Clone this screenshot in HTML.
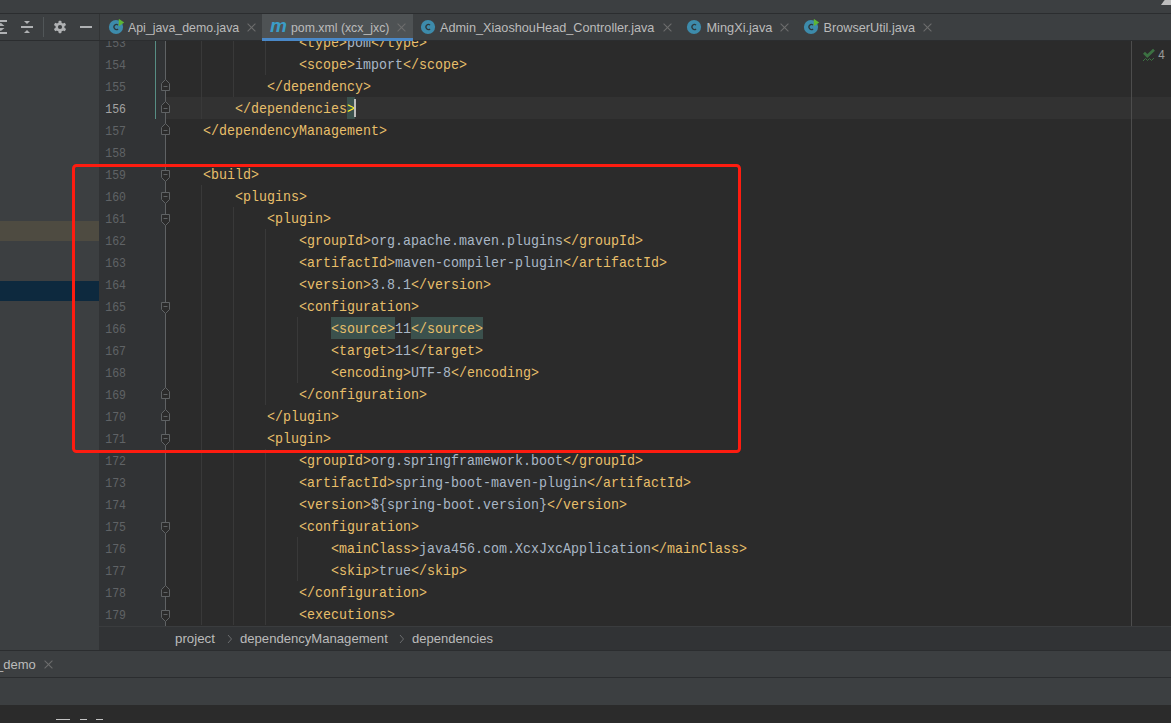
<!DOCTYPE html>
<html><head><meta charset="utf-8">
<style>
*{margin:0;padding:0;box-sizing:border-box}
html,body{width:1171px;height:723px;overflow:hidden;background:#3C3F41}
body{position:relative;font-family:"Liberation Sans",sans-serif}
.a{position:absolute}
.ln{position:absolute;height:22px;line-height:22px;font-family:"Liberation Mono",monospace;font-size:13.333px;white-space:pre;color:#A9B7C6;transform:scaleY(1.065);transform-origin:0 16px}
.tg{color:#E8BF6A}
.vl{color:#A9B7C6}
.hl{background:#3B514D}
.mt{color:#FFEF28}
.num{position:absolute;left:99px;width:27px;text-align:right;height:22px;line-height:22px;font-family:"Liberation Mono",monospace;font-size:11.5px;color:#606366;transform:scaleY(1.15);transform-origin:0 0}
.num.cur{color:#A4A3A3}
.fold{position:absolute;left:160px;width:11px;height:14px}
.fold svg{display:block}
.guide{position:absolute;width:1px;background:#393939}
.tab{position:absolute;top:14.7px;height:26px;line-height:26px;color:#BBBBBB;white-space:nowrap}
.tt{position:absolute;top:0;font-size:12.6px}
.x{position:absolute;width:9px;height:9px}
.x:before,.x:after{content:"";position:absolute;left:4px;top:-1px;width:1px;height:11px;background:#6E6E6E;transform:rotate(45deg)}
.x:after{transform:rotate(-45deg)}
.cic{position:absolute;width:15px;height:15px;border-radius:50%;background:#3D8EAE}
.cic:after{content:"";position:absolute;left:4px;top:4px;width:7px;height:7px;border:1.5px solid #2E3436;border-radius:50%;border-right-color:transparent;box-sizing:border-box}
.run{position:absolute;width:0;height:0;border-top:4px solid transparent;border-bottom:4px solid transparent;border-left:6px solid #5BB534}
.bc{position:absolute;top:626.8px;height:24px;line-height:24px;font-size:13px;color:#BBBBBB}
</style></head><body>
<!-- top strip -->
<div class="a" style="left:0;top:0;width:1171px;height:13px;background:#3C3F41"></div>
<div class="a" style="left:1161px;top:0;width:12px;height:5px;background:#BDBDBD;border-radius:4px 0 0 0;clip-path:polygon(30% 0,100% 0,100% 100%,0 100%)"></div>
<div class="a" style="left:0;top:13px;width:1171px;height:1px;background:#2B2D2F"></div>
<!-- left toolbar -->
<div class="a" style="left:0;top:20px;width:7px;height:2px;background:#AFB1B3"></div>
<div class="a" style="left:0;top:32px;width:7px;height:2px;background:#AFB1B3"></div>
<svg class="a" style="left:0;top:14px" width="8" height="26" viewBox="0 0 8 26"><path d="M-2.9 12 L4.5 12 L0.8 8.8 Z M-2.9 13.9 L4.5 13.9 L0.8 17.1 Z" fill="#AFB1B3"/></svg>
<div class="a" style="left:21px;top:26px;width:12px;height:2px;background:#AFB1B3"></div>
<div class="a" style="left:24px;top:20.5px;width:0;height:0;border-left:3px solid transparent;border-right:3px solid transparent;border-top:3.5px solid #AFB1B3"></div>
<div class="a" style="left:24px;top:29.5px;width:0;height:0;border-left:3px solid transparent;border-right:3px solid transparent;border-bottom:3.5px solid #AFB1B3"></div>
<div class="a" style="left:43px;top:17px;width:1px;height:20px;background:#515658"></div>
<svg class="a" style="left:53px;top:20px" width="14" height="14" viewBox="0 0 14 14"><g fill="#AFB1B3" transform="translate(7 7) scale(0.9)"><circle r="5"/><rect x="-1.6" y="-7" width="3.2" height="3" rx="0.8"/><rect x="-1.6" y="4" width="3.2" height="3" rx="0.8"/><rect x="-1.6" y="-7" width="3.2" height="3" rx="0.8" transform="rotate(60)"/><rect x="-1.6" y="-7" width="3.2" height="3" rx="0.8" transform="rotate(120)"/><rect x="-1.6" y="-7" width="3.2" height="3" rx="0.8" transform="rotate(240)"/><rect x="-1.6" y="-7" width="3.2" height="3" rx="0.8" transform="rotate(300)"/></g><circle cx="7" cy="7" r="2.1" fill="#3C3F41"/></svg>
<div class="a" style="left:80px;top:26px;width:12px;height:2px;background:#AFB1B3"></div>
<!-- tab bar -->
<div class="a" style="left:0;top:40px;width:1171px;height:1px;background:#2B2D2F"></div>
<div class="a" style="left:99px;top:14px;width:1px;height:26px;background:#323435"></div>
<svg class="a" style="left:108px;top:19px" width="18" height="16" viewBox="0 0 18 16"><circle cx="8" cy="8" r="7.1" fill="#3D8BAB"/><path d="M10.1 6.1 A2.5 2.5 0 1 0 10.1 9.9" fill="none" stroke="#2D383C" stroke-width="1.25"/><path d="M10.8 -0.2 L16.2 3.5 L10.8 7.2 Z" fill="#5DB536"/></svg>
<div class="tab" style="left:128px;font-size:12.35px">Api_java_demo.java</div>
<div class="x" style="left:247px;top:23px"></div>
<div class="a" style="left:262px;top:14px;width:151px;height:27px;background:#4E5254"></div>
<div class="a" style="left:262px;top:38px;width:151px;height:3px;background:#4A88C7"></div>
<div class="a" style="left:270px;top:14px;font-size:19px;font-style:italic;font-weight:bold;color:#3B9DC8;line-height:24px">m</div>
<div class="tab" style="left:291px;font-size:12.3px">pom.xml (xcx_jxc)</div>
<div class="x" style="left:397px;top:23px"></div>
<svg class="a" style="left:420px;top:19px" width="18" height="16" viewBox="0 0 18 16"><circle cx="8" cy="8" r="7.1" fill="#3D8BAB"/><path d="M10.1 6.1 A2.5 2.5 0 1 0 10.1 9.9" fill="none" stroke="#2D383C" stroke-width="1.25"/></svg>
<div class="tab" style="left:440px;font-size:12.7px">Admin_XiaoshouHead_Controller.java</div>
<div class="x" style="left:662.5px;top:22.7px"></div>
<svg class="a" style="left:686px;top:19px" width="18" height="16" viewBox="0 0 18 16"><circle cx="8" cy="8" r="7.1" fill="#3D8BAB"/><path d="M10.1 6.1 A2.5 2.5 0 1 0 10.1 9.9" fill="none" stroke="#2D383C" stroke-width="1.25"/></svg>
<div class="tab" style="left:706.5px;font-size:12.75px">MingXi.java</div>
<div class="x" style="left:779.5px;top:22.7px"></div>
<svg class="a" style="left:803px;top:19px" width="18" height="16" viewBox="0 0 18 16"><circle cx="8" cy="8" r="7.1" fill="#3D8BAB"/><path d="M10.1 6.1 A2.5 2.5 0 1 0 10.1 9.9" fill="none" stroke="#2D383C" stroke-width="1.25"/><path d="M10.8 -0.2 L16.2 3.5 L10.8 7.2 Z" fill="#5DB536"/></svg>
<div class="tab" style="left:823.5px;font-size:12.7px">BrowserUtil.java</div>
<div class="x" style="left:922.5px;top:22.8px"></div>
<!-- left panel highlights -->
<div class="a" style="left:0;top:221px;width:99px;height:20px;background:#4E4B41"></div>
<div class="a" style="left:0;top:281px;width:99px;height:20px;background:#0D293E"></div>
<!-- gutter + editor -->
<div class="a" style="left:99px;top:41px;width:67px;height:585px;background:#313335"></div>
<div class="a" style="left:166px;top:41px;width:1005px;height:585px;background:#2B2B2B;overflow:hidden" id="ed"></div>
<div class="a" style="left:166px;top:97px;width:1005px;height:22px;background:#323232"></div>
<div class="a" style="left:1131px;top:41px;width:1px;height:585px;background:#4D4D4D"></div>
<div class="a" style="left:155px;top:41px;width:1px;height:78px;background:#578E84"></div>
<div class="a" style="left:165px;top:41px;width:1px;height:585px;background:#5F6264"></div>
<div class="a" style="left:0;top:0;width:1171px;height:626px;overflow:hidden;clip-path:inset(41px 0 0 0)">
<div class="a" style="left:331px;top:317px;width:64px;height:22px;background:#3B514D"></div>
<div class="a" style="left:411px;top:317px;width:72px;height:22px;background:#3B514D"></div>
<div class="a" style="left:347px;top:97px;width:8px;height:22px;background:#3B514D"></div>
<div class="ln" style="top:33.3px;left:299px"><span class="tg">&lt;type&gt;</span><span class="vl">pom</span><span class="tg">&lt;/type&gt;</span></div>
<div class="num" style="top:30.7px">153</div>
<div class="ln" style="top:55.3px;left:299px"><span class="tg">&lt;scope&gt;</span><span class="vl">import</span><span class="tg">&lt;/scope&gt;</span></div>
<div class="num" style="top:52.7px">154</div>
<div class="ln" style="top:77.3px;left:267px"><span class="tg">&lt;/dependency&gt;</span></div>
<div class="num" style="top:74.7px">155</div>
<div class="fold" style="top:78px"><svg width="11" height="14" viewBox="0 0 11 14"><path d="M1.5 12.5 H9.5 V5.5 L5.5 1.5 L1.5 5.5 Z" fill="#2B2B2B" stroke="#5F6264" stroke-width="1"/><path d="M3.5 8.5 H7.5" stroke="#5F6264" stroke-width="1"/></svg></div>
<div class="ln" style="top:99.3px;left:235px"><span class="tg">&lt;/dependencies</span><span class="mt">&gt;</span></div>
<div class="num cur" style="top:96.7px">156</div>
<div class="fold" style="top:100px"><svg width="11" height="14" viewBox="0 0 11 14"><path d="M1.5 12.5 H9.5 V5.5 L5.5 1.5 L1.5 5.5 Z" fill="#2B2B2B" stroke="#5F6264" stroke-width="1"/><path d="M3.5 8.5 H7.5" stroke="#5F6264" stroke-width="1"/></svg></div>
<div class="ln" style="top:121.3px;left:203px"><span class="tg">&lt;/dependencyManagement&gt;</span></div>
<div class="num" style="top:118.7px">157</div>
<div class="fold" style="top:122px"><svg width="11" height="14" viewBox="0 0 11 14"><path d="M1.5 12.5 H9.5 V5.5 L5.5 1.5 L1.5 5.5 Z" fill="#2B2B2B" stroke="#5F6264" stroke-width="1"/><path d="M3.5 8.5 H7.5" stroke="#5F6264" stroke-width="1"/></svg></div>
<div class="ln" style="top:143.3px;left:171px"></div>
<div class="num" style="top:140.7px">158</div>
<div class="ln" style="top:165.3px;left:203px"><span class="tg">&lt;build&gt;</span></div>
<div class="num" style="top:162.7px">159</div>
<div class="fold" style="top:169px"><svg width="11" height="14" viewBox="0 0 11 14"><path d="M1.5 1.5 H9.5 V8.5 L5.5 12.5 L1.5 8.5 Z" fill="#2B2B2B" stroke="#5F6264" stroke-width="1"/><path d="M3.5 5.5 H7.5" stroke="#5F6264" stroke-width="1"/></svg></div>
<div class="ln" style="top:187.3px;left:235px"><span class="tg">&lt;plugins&gt;</span></div>
<div class="num" style="top:184.7px">160</div>
<div class="fold" style="top:191px"><svg width="11" height="14" viewBox="0 0 11 14"><path d="M1.5 1.5 H9.5 V8.5 L5.5 12.5 L1.5 8.5 Z" fill="#2B2B2B" stroke="#5F6264" stroke-width="1"/><path d="M3.5 5.5 H7.5" stroke="#5F6264" stroke-width="1"/></svg></div>
<div class="ln" style="top:209.3px;left:267px"><span class="tg">&lt;plugin&gt;</span></div>
<div class="num" style="top:206.7px">161</div>
<div class="fold" style="top:213px"><svg width="11" height="14" viewBox="0 0 11 14"><path d="M1.5 1.5 H9.5 V8.5 L5.5 12.5 L1.5 8.5 Z" fill="#2B2B2B" stroke="#5F6264" stroke-width="1"/><path d="M3.5 5.5 H7.5" stroke="#5F6264" stroke-width="1"/></svg></div>
<div class="ln" style="top:231.3px;left:299px"><span class="tg">&lt;groupId&gt;</span><span class="vl">org.apache.maven.plugins</span><span class="tg">&lt;/groupId&gt;</span></div>
<div class="num" style="top:228.7px">162</div>
<div class="ln" style="top:253.3px;left:299px"><span class="tg">&lt;artifactId&gt;</span><span class="vl">maven-compiler-plugin</span><span class="tg">&lt;/artifactId&gt;</span></div>
<div class="num" style="top:250.7px">163</div>
<div class="ln" style="top:275.3px;left:299px"><span class="tg">&lt;version&gt;</span><span class="vl">3.8.1</span><span class="tg">&lt;/version&gt;</span></div>
<div class="num" style="top:272.7px">164</div>
<div class="ln" style="top:297.3px;left:299px"><span class="tg">&lt;configuration&gt;</span></div>
<div class="num" style="top:294.7px">165</div>
<div class="fold" style="top:301px"><svg width="11" height="14" viewBox="0 0 11 14"><path d="M1.5 1.5 H9.5 V8.5 L5.5 12.5 L1.5 8.5 Z" fill="#2B2B2B" stroke="#5F6264" stroke-width="1"/><path d="M3.5 5.5 H7.5" stroke="#5F6264" stroke-width="1"/></svg></div>
<div class="ln" style="top:319.3px;left:331px"><span class="tg">&lt;source&gt;</span><span class="vl">11</span><span class="tg">&lt;/source&gt;</span></div>
<div class="num" style="top:316.7px">166</div>
<div class="ln" style="top:341.3px;left:331px"><span class="tg">&lt;target&gt;</span><span class="vl">11</span><span class="tg">&lt;/target&gt;</span></div>
<div class="num" style="top:338.7px">167</div>
<div class="ln" style="top:363.3px;left:331px"><span class="tg">&lt;encoding&gt;</span><span class="vl">UTF-8</span><span class="tg">&lt;/encoding&gt;</span></div>
<div class="num" style="top:360.7px">168</div>
<div class="ln" style="top:385.3px;left:299px"><span class="tg">&lt;/configuration&gt;</span></div>
<div class="num" style="top:382.7px">169</div>
<div class="fold" style="top:386px"><svg width="11" height="14" viewBox="0 0 11 14"><path d="M1.5 12.5 H9.5 V5.5 L5.5 1.5 L1.5 5.5 Z" fill="#2B2B2B" stroke="#5F6264" stroke-width="1"/><path d="M3.5 8.5 H7.5" stroke="#5F6264" stroke-width="1"/></svg></div>
<div class="ln" style="top:407.3px;left:267px"><span class="tg">&lt;/plugin&gt;</span></div>
<div class="num" style="top:404.7px">170</div>
<div class="fold" style="top:408px"><svg width="11" height="14" viewBox="0 0 11 14"><path d="M1.5 12.5 H9.5 V5.5 L5.5 1.5 L1.5 5.5 Z" fill="#2B2B2B" stroke="#5F6264" stroke-width="1"/><path d="M3.5 8.5 H7.5" stroke="#5F6264" stroke-width="1"/></svg></div>
<div class="ln" style="top:429.3px;left:267px"><span class="tg">&lt;plugin&gt;</span></div>
<div class="num" style="top:426.7px">171</div>
<div class="fold" style="top:433px"><svg width="11" height="14" viewBox="0 0 11 14"><path d="M1.5 1.5 H9.5 V8.5 L5.5 12.5 L1.5 8.5 Z" fill="#2B2B2B" stroke="#5F6264" stroke-width="1"/><path d="M3.5 5.5 H7.5" stroke="#5F6264" stroke-width="1"/></svg></div>
<div class="ln" style="top:451.3px;left:299px"><span class="tg">&lt;groupId&gt;</span><span class="vl">org.springframework.boot</span><span class="tg">&lt;/groupId&gt;</span></div>
<div class="num" style="top:448.7px">172</div>
<div class="ln" style="top:473.3px;left:299px"><span class="tg">&lt;artifactId&gt;</span><span class="vl">spring-boot-maven-plugin</span><span class="tg">&lt;/artifactId&gt;</span></div>
<div class="num" style="top:470.7px">173</div>
<div class="ln" style="top:495.3px;left:299px"><span class="tg">&lt;version&gt;</span><span class="vl">${spring-boot.version}</span><span class="tg">&lt;/version&gt;</span></div>
<div class="num" style="top:492.7px">174</div>
<div class="ln" style="top:517.3px;left:299px"><span class="tg">&lt;configuration&gt;</span></div>
<div class="num" style="top:514.7px">175</div>
<div class="fold" style="top:521px"><svg width="11" height="14" viewBox="0 0 11 14"><path d="M1.5 1.5 H9.5 V8.5 L5.5 12.5 L1.5 8.5 Z" fill="#2B2B2B" stroke="#5F6264" stroke-width="1"/><path d="M3.5 5.5 H7.5" stroke="#5F6264" stroke-width="1"/></svg></div>
<div class="ln" style="top:539.3px;left:331px"><span class="tg">&lt;mainClass&gt;</span><span class="vl">java456.com.XcxJxcApplication</span><span class="tg">&lt;/mainClass&gt;</span></div>
<div class="num" style="top:536.7px">176</div>
<div class="ln" style="top:561.3px;left:331px"><span class="tg">&lt;skip&gt;</span><span class="vl">true</span><span class="tg">&lt;/skip&gt;</span></div>
<div class="num" style="top:558.7px">177</div>
<div class="ln" style="top:583.3px;left:299px"><span class="tg">&lt;/configuration&gt;</span></div>
<div class="num" style="top:580.7px">178</div>
<div class="fold" style="top:584px"><svg width="11" height="14" viewBox="0 0 11 14"><path d="M1.5 12.5 H9.5 V5.5 L5.5 1.5 L1.5 5.5 Z" fill="#2B2B2B" stroke="#5F6264" stroke-width="1"/><path d="M3.5 8.5 H7.5" stroke="#5F6264" stroke-width="1"/></svg></div>
<div class="ln" style="top:605.3px;left:299px"><span class="tg">&lt;executions&gt;</span></div>
<div class="num" style="top:602.7px">179</div>
<div class="fold" style="top:609px"><svg width="11" height="14" viewBox="0 0 11 14"><path d="M1.5 1.5 H9.5 V8.5 L5.5 12.5 L1.5 8.5 Z" fill="#2B2B2B" stroke="#5F6264" stroke-width="1"/><path d="M3.5 5.5 H7.5" stroke="#5F6264" stroke-width="1"/></svg></div>
<div class="guide" style="left:201px;top:41px;height:78px"></div>
<div class="guide" style="left:233px;top:41px;height:56px"></div>
<div class="guide" style="left:265px;top:41px;height:34px"></div>
<div class="guide" style="left:201px;top:185px;height:440px"></div>
<div class="guide" style="left:233px;top:207px;height:418px"></div>
<div class="guide" style="left:265px;top:229px;height:176px"></div>
<div class="guide" style="left:297px;top:317px;height:66px"></div>
<div class="guide" style="left:265px;top:449px;height:176px"></div>
<div class="guide" style="left:297px;top:537px;height:44px"></div>
</div>
<div class="a" style="left:354px;top:99px;width:2px;height:18px;background:#BBBBBB"></div>
<!-- inspection widget -->
<svg class="a" style="left:1142px;top:48px" width="14" height="14" viewBox="0 0 14 14"><path d="M2 4.8 L5.3 8 L12 1.8" fill="none" stroke="#3C7142" stroke-width="2.8"/><path d="M1 13 L3.5 10.5 L5.5 12.5 L7.5 10.5 L9.5 12.5 L12 10" fill="none" stroke="#3C7142" stroke-width="1"/></svg>
<div class="a" style="left:1157.5px;top:47px;font-size:13px;line-height:16px;color:#9A9A9A;transform:scaleX(0.9)">4</div>
<!-- breadcrumb -->
<div class="a" style="left:99px;top:626px;width:1072px;height:24px;background:#313335"></div>
<div class="a" style="left:99px;top:626px;width:1072px;height:1px;background:#3A3C3E"></div>
<div class="bc" style="left:175px;font-size:13.3px">project</div>
<svg class="a" style="left:227px;top:634px" width="6" height="10" viewBox="0 0 6 10"><path d="M1 1 L4.5 5 L1 9" fill="none" stroke="#6A6C6E" stroke-width="1"/></svg>
<div class="bc" style="left:240px;font-size:13.1px">dependencyManagement</div>
<svg class="a" style="left:399px;top:634px" width="6" height="10" viewBox="0 0 6 10"><path d="M1 1 L4.5 5 L1 9" fill="none" stroke="#6A6C6E" stroke-width="1"/></svg>
<div class="bc" style="left:412px;font-size:13px">dependencies</div>
<div class="a" style="left:0;top:650px;width:1171px;height:1px;background:#2B2D2F"></div>
<!-- bottom tabs -->
<div class="a" style="left:0;top:651px;width:1171px;height:26px;background:#3C3F41"></div>
<div class="a" style="left:-4px;top:652px;height:26px;line-height:26px;font-size:13px;color:#BBBBBB">_demo</div>
<div class="x" style="left:44px;top:660px"></div>
<div class="a" style="left:0;top:677px;width:1171px;height:1px;background:#2B2D2F"></div>
<div class="a" style="left:0;top:678px;width:1171px;height:27px;background:#3C3F41"></div>
<div class="a" style="left:0;top:705px;width:1171px;height:18px;background:#2B2B2B"></div>
<div class="a" style="left:55.5px;top:718.7px;width:7px;height:1.6px;background:#C4C4C4"></div>
<div class="a" style="left:63.4px;top:718.7px;width:7px;height:1.6px;background:#C4C4C4"></div>
<div class="a" style="left:79.5px;top:718.7px;width:7px;height:1.6px;background:#C4C4C4"></div>
<div class="a" style="left:95.5px;top:718.7px;width:7px;height:1.6px;background:#C4C4C4"></div>
<!-- red box -->
<div class="a" style="left:72.4px;top:164.4px;width:668.8px;height:288.8px;border:3.6px solid #FE1C10;border-radius:4.5px"></div>
</body></html>
